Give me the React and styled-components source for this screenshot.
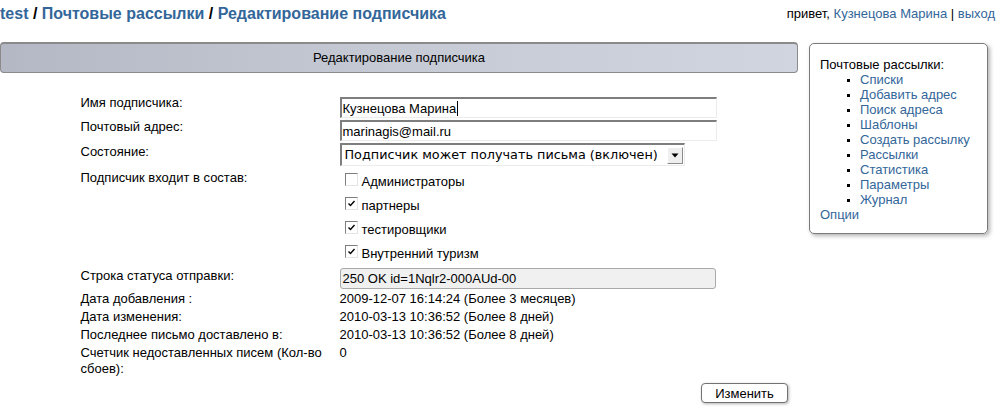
import React from "react";
import styled, { createGlobalStyle } from "styled-components";

const Global = createGlobalStyle`
  html, body { margin: 0; padding: 0; background: #fff; }
  body { font-family: "Liberation Sans", Arial, sans-serif; font-size: 13px; color: #000; }
  a { color: #336699; text-decoration: none; }
`;

const Page = styled.div`
  width: 998px;
  height: 413px;
  overflow: hidden;
`;

const TopBar = styled.div`
  height: 42px;
  display: flex;
  justify-content: space-between;
  align-items: flex-start;
  padding: 4px 3px 0 0;
  box-sizing: border-box;
`;

const Crumbs = styled.div`
  font-size: 16px;
  font-weight: bold;
  line-height: 19px;
  color: #000;
`;

const Greeting = styled.div`
  font-size: 13px;
  line-height: 19px;
`;

const Columns = styled.div`
  display: flex;
  align-items: flex-start;
`;

const Main = styled.div`
  width: 798px;
`;

const SectionHead = styled.div`
  height: 31px;
  box-sizing: border-box;
  border: 1px solid #8a8a8a;
  border-top-width: 2px;
  border-radius: 4px;
  background: linear-gradient(to right, #b3b8c4, #c6cad5 50%, #d1d5df);
  text-align: center;
  line-height: 28px;
  font-size: 13px;
`;

const Form = styled.div`
  width: 637px;
  margin: 22px auto 0;
`;

const Row = styled.div`
  display: grid;
  grid-template-columns: 259px 378px;
  height: ${(p) => (p.$h ? `${p.$h}px` : "auto")};
  padding-bottom: ${(p) => p.$pb || 0}px;
`;

const Label = styled.div`
  padding-top: ${(p) => p.$pt || 0}px;
  line-height: ${(p) => p.$lh || 14}px;
  padding-right: 8px;
`;

const Cell = styled.div`
  padding-top: ${(p) => p.$pt || 0}px;
  line-height: ${(p) => p.$lh || 14}px;
`;

const TextInput = styled.div`
  height: 21px;
  width: 377px;
  box-sizing: border-box;
  border-top: 2px solid #7e7e7e;
  border-left: 2px solid #7e7e7e;
  border-right: 1px solid #ececec;
  border-bottom: 1px solid #ececec;
  background: #fff;
  font-size: 13px;
  line-height: 17px;
  padding-left: 1px;
  display: flex;
  align-items: center;
`;

const Caret = styled.span`
  display: inline-block;
  width: 1px;
  height: 15px;
  background: #000;
  margin-left: 1px;
`;

const SelectBox = styled.div`
  width: 345px;
  height: 23px;
  box-sizing: border-box;
  border-top: 2px solid #7e7e7e;
  border-left: 2px solid #7e7e7e;
  border-right: 1px solid #ececec;
  border-bottom: 1px solid #ececec;
  background: #fff;
  display: flex;
  align-items: center;
  justify-content: space-between;
  padding: 0 1px 0 3px;
`;

const SelectText = styled.span`
  font-family: "DejaVu Sans", Verdana, sans-serif;
  font-size: 12.8px;
  white-space: nowrap;
`;

const SelectArrow = styled.span`
  width: 16px;
  height: 17px;
  flex: none;
  box-sizing: border-box;
  background: #efefef;
  border-top: 1px solid #fff;
  border-left: 1px solid #fff;
  border-right: 1px solid #8c8c8c;
  border-bottom: 1px solid #8c8c8c;
  display: flex;
  align-items: center;
  justify-content: center;
`;

const CheckList = styled.div`
  display: flex;
  flex-direction: column;
`;

const CheckItem = styled.label`
  height: 24px;
  display: flex;
  align-items: center;
  padding-left: 5px;
  font-size: 13px;
  gap: 4px;
`;

const Box = styled.span`
  width: 13px;
  height: 13px;
  box-sizing: border-box;
  border-top: 1px solid #7e7e7e;
  border-left: 1px solid #7e7e7e;
  border-right: 1px solid #e4e4e4;
  border-bottom: 1px solid #e4e4e4;
  background: #fff;
  position: relative;
  margin-top: -3px;
`;

const StatusInput = styled.div`
  width: 376px;
  height: 21px;
  box-sizing: border-box;
  border: 1px solid #a9a9a9;
  border-radius: 3px;
  background: #f0f0f0;
  font-size: 13px;
  line-height: 19px;
  padding-left: 2px;
`;

const Actions = styled.div`
  display: flex;
  justify-content: flex-end;
  padding: 4px 10px 0 0;
`;

const Button = styled.button`
  height: 20px;
  width: 87px;
  box-sizing: border-box;
  border: 1px solid #727272;
  border-radius: 4px;
  background: #fff;
  box-shadow: 1px 1px 3px rgba(0, 0, 0, 0.3);
  font-family: "Liberation Sans", Arial, sans-serif;
  font-size: 13px;
  padding: 0;
  color: #000;
`;

const Sidebar = styled.div`
  margin-left: 11px;
  margin-top: 1px;
  width: 179px;
  box-sizing: border-box;
  border: 1px solid #7a7a7a;
  border-radius: 5px;
  padding: 13px 10px 11px;
  box-shadow: 2px 2px 4px rgba(0, 0, 0, 0.3);
  line-height: 15px;
  font-size: 13px;
`;

const NavList = styled.ul`
  margin: 0;
  padding-left: 40px;
  list-style: square;
  li::marker { font-size: 10px; }
`;

const Check = () => (
  <svg width="9" height="9" viewBox="0 0 9 9" style={{ position: "absolute", left: 1, top: 1 }}>
    <path d="M1.5 4.5 L3.5 6.5 L7.5 2" fill="none" stroke="#000" strokeWidth="1.4" />
  </svg>
);

const groups = [
  { name: "Администраторы", on: false },
  { name: "партнеры", on: true },
  { name: "тестировщики", on: true },
  { name: "Внутренний туризм", on: true },
];

const nav = ["Списки", "Добавить адрес", "Поиск адреса", "Шаблоны", "Создать рассылку", "Рассылки", "Статистика", "Параметры", "Журнал"];

export default function App() {
  return (
    <Page>
      <Global />
      <TopBar>
        <Crumbs>
          <a href="#">test</a> / <a href="#">Почтовые рассылки</a> / <a href="#">Редактирование подписчика</a>
        </Crumbs>
        <Greeting>
          привет, <a href="#">Кузнецова Марина</a> | <a href="#">выход</a>
        </Greeting>
      </TopBar>
      <Columns>
        <Main>
          <SectionHead>Редактирование подписчика</SectionHead>
          <Form>
            <Row $h={24}>
              <Label $pt={1}>Имя подписчика:</Label>
              <Cell $pt={2}>
                <TextInput>Кузнецова Марина<Caret /></TextInput>
              </Cell>
            </Row>
            <Row $h={24}>
              <Label $pt={1}>Почтовый адрес:</Label>
              <Cell $pt={1}>
                <TextInput>marinagis@mail.ru</TextInput>
              </Cell>
            </Row>
            <Row $h={26}>
              <Label $pt={2}>Состояние:</Label>
              <Cell>
                <SelectBox>
                  <SelectText>Подписчик может получать письма (включен)</SelectText>
                  <SelectArrow>
                    <svg width="8" height="5" viewBox="0 0 8 5"><path d="M0.5 0.5 H7.5 L4 4.5 Z" fill="#000" /></svg>
                  </SelectArrow>
                </SelectBox>
              </Cell>
            </Row>
            <Row $h={99}>
              <Label $pt={2}>Подписчик входит в состав:</Label>
              <CheckList>
                {groups.map((g) => (
                  <CheckItem key={g.name}>
                    <Box>{g.on && <Check />}</Box>
                    {g.name}
                  </CheckItem>
                ))}
              </CheckList>
            </Row>
            <Row $h={23}>
              <Label $pt={1}>Строка статуса отправки:</Label>
              <Cell>
                <StatusInput>250 OK id=1Nqlr2-000AUd-00</StatusInput>
              </Cell>
            </Row>
            <Row $pb={2}>
              <Label $lh={16}>Дата добавления :</Label>
              <Cell $lh={16}>2009-12-07 16:14:24 (Более 3 месяцев)</Cell>
            </Row>
            <Row $pb={2}>
              <Label $lh={16}>Дата изменения:</Label>
              <Cell $lh={16}>2010-03-13 10:36:52 (Более 8 дней)</Cell>
            </Row>
            <Row $pb={2}>
              <Label $lh={16}>Последнее письмо доставлено в:</Label>
              <Cell $lh={16}>2010-03-13 10:36:52 (Более 8 дней)</Cell>
            </Row>
            <Row $pb={2}>
              <Label $lh={16}>Счетчик недоставленных писем (Кол-во сбоев):</Label>
              <Cell $lh={16}>0</Cell>
            </Row>
          </Form>
          <Actions>
            <Button>Изменить</Button>
          </Actions>
        </Main>
        <Sidebar>
          Почтовые рассылки:
          <NavList>
            {nav.map((n) => (
              <li key={n}><a href="#">{n}</a></li>
            ))}
          </NavList>
          <a href="#">Опции</a>
        </Sidebar>
      </Columns>
    </Page>
  );
}
